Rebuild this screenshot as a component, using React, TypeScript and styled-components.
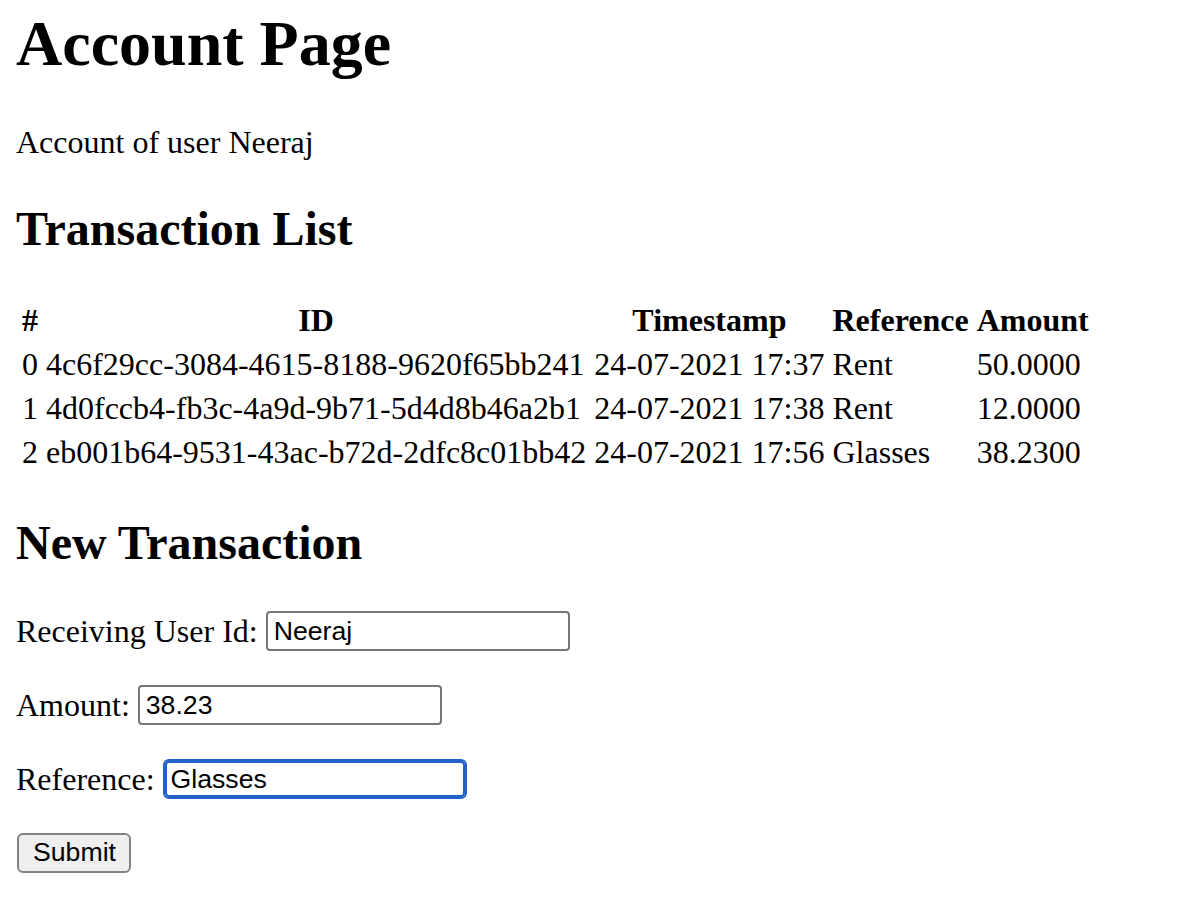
import styled, { createGlobalStyle } from 'styled-components';

const GlobalStyle = createGlobalStyle`
  body {
    background: #ffffff;
    color: #000000;
    font-family: 'Liberation Serif', 'Times New Roman', serif;
    font-size: 32px;
    margin: 7px 16px 16px;
  }
`;

const S = {
  Title: styled.h1`
    font-size: 64px;
    font-weight: 700;
    margin: 0 0 42.88px;
  `,

  Text: styled.p`
    margin: 30px 0 32px;
  `,

  Heading: styled.h2`
    font-size: 48px;
    font-weight: 700;
    margin: 39.84px 0;
  `,

  Table: styled.table`
    border-collapse: separate;
    border-spacing: 4px;

    th {
      font-weight: 700;
      line-height: 36px;
      padding: 2px;
      text-align: center;
    }

    td {
      line-height: 36px;
      padding: 2px;
      text-align: left;
      white-space: nowrap;
    }
  `,

  Field: styled.p`
    align-items: center;
    display: flex;
    gap: 8px;
    height: 42px;
    margin: 32px 0;
  `,

  Input: styled.input<{ $focused?: boolean }>`
    background: #ffffff;
    border: 2px solid ${({ $focused }) => ($focused ? '#2161c9' : '#767676')};
    border-radius: ${({ $focused }) => ($focused ? '6px' : '4px')};
    box-shadow: ${({ $focused }) => ($focused ? 'inset 0 0 0 2px #2161c9' : 'none')};
    box-sizing: border-box;
    color: #000000;
    font-family: 'Liberation Sans', Arial, sans-serif;
    font-size: 26.67px;
    height: 40px;
    outline: none;
    padding: 2px 6px;
    width: 304px;
  `,

  Button: styled.button`
    background: #efefef;
    border: 2px solid #838383;
    border-radius: 6px;
    box-sizing: border-box;
    color: #000000;
    font-family: 'Liberation Sans', Arial, sans-serif;
    font-size: 26.67px;
    height: 40px;
    margin-left: 1px;
    padding: 0 14px;
    width: 114px;
  `,
};

const transactions = [
  { id: '4c6f29cc-3084-4615-8188-9620f65bb241', time: '24-07-2021 17:37', reference: 'Rent', amount: '50.0000' },
  { id: '4d0fccb4-fb3c-4a9d-9b71-5d4d8b46a2b1', time: '24-07-2021 17:38', reference: 'Rent', amount: '12.0000' },
  { id: 'eb001b64-9531-43ac-b72d-2dfc8c01bb42', time: '24-07-2021 17:56', reference: 'Glasses', amount: '38.2300' },
];

export default function App() {
  return (
    <>
      <GlobalStyle />
      <S.Title>Account Page</S.Title>
      <S.Text>Account of user Neeraj</S.Text>

      <S.Heading>Transaction List</S.Heading>
      <S.Table>
        <thead>
          <tr>
            <th>#</th>
            <th>ID</th>
            <th>Timestamp</th>
            <th>Reference</th>
            <th>Amount</th>
          </tr>
        </thead>
        <tbody>
          {transactions.map((tx, i) => (
            <tr key={tx.id}>
              <td>{i}</td>
              <td>{tx.id}</td>
              <td>{tx.time}</td>
              <td>{tx.reference}</td>
              <td>{tx.amount}</td>
            </tr>
          ))}
        </tbody>
      </S.Table>

      <S.Heading>New Transaction</S.Heading>
      <form onSubmit={(e) => e.preventDefault()}>
        <S.Field>
          Receiving User Id: <S.Input type="text" defaultValue="Neeraj" />
        </S.Field>
        <S.Field>
          Amount: <S.Input type="text" defaultValue="38.23" />
        </S.Field>
        <S.Field>
          Reference: <S.Input type="text" defaultValue="Glasses" $focused />
        </S.Field>
        <S.Button type="submit">Submit</S.Button>
      </form>
    </>
  );
}
